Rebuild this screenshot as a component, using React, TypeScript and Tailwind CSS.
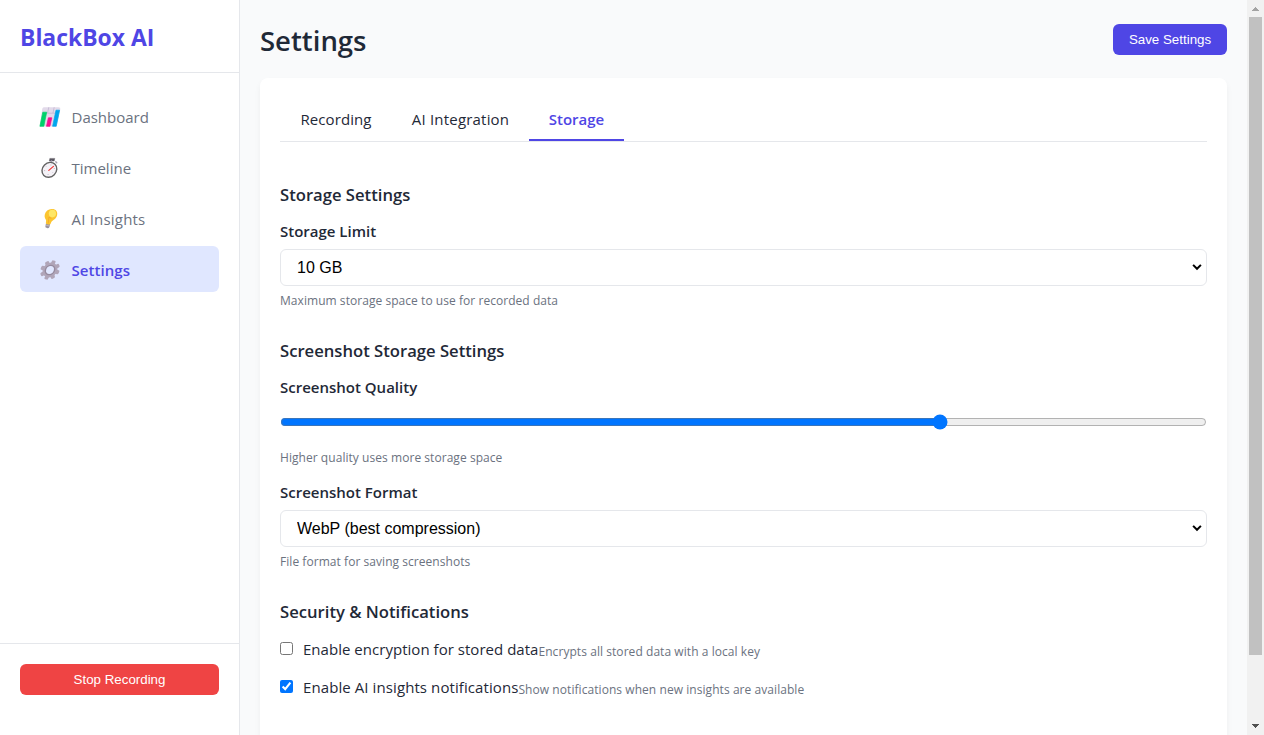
import { useState } from 'react';
import type { ReactNode } from 'react';

function ChartIcon() {
  return (
    <svg width="24" height="22" viewBox="0.8 0 24 22" className="shrink-0">
      <path d="M5.6 1.2H20.4Q22.6 1.2 22.1 3.2L18.4 20.6H1.6L4.1 2.8Q4.4 1.2 5.6 1.2Z" fill="#e2daea" />
      <path d="M10.6 1.2 9.4 7M16 1.2 14.8 7M4 7.2H20" stroke="#c3b6d2" strokeWidth=".8" />
      <path d="M4.6 6.2H8.5L5.6 20.3H1.7Z" fill="#00d26a" stroke="#00d26a" strokeWidth=".7" strokeLinejoin="round" />
      <path d="M10.2 11.8H13.6L11.7 20.3H8.3Z" fill="#fc0f91" stroke="#f70a8d" strokeWidth=".7" strokeLinejoin="round" />
      <path d="M17.8 4.2H21.4L18 20.3H14.4Z" fill="#00a6ed" stroke="#00a6ed" strokeWidth=".7" strokeLinejoin="round" />
    </svg>
  );
}

function StopwatchIcon() {
  return (
    <svg width="24" height="22" viewBox="0.5 0 24 22" className="shrink-0">
      <path d="M11.3 1.4H16.3L15.7 4H10.8Z" fill="#5a5661" stroke="#5a5661" strokeWidth=".4" strokeLinejoin="round" />
      <path d="M13 4 12.7 5.5M17.3 4.8 18.2 5.7" stroke="#aaa2b2" strokeWidth="1.5" strokeLinecap="round" />
      <ellipse cx="10.9" cy="12.8" rx="7.9" ry="6.9" transform="rotate(-45 10.9 12.8)" fill="#f5f2f7" stroke="#636363" strokeWidth="1.4" />
      <path d="M12.4 7.6V8.4M9.6 17V17.8M5.7 13.6H6.6M15.3 11.5H16.2M7.5 9.4 8 9.9M14.2 15.5 14.7 16" stroke="#aaa2b2" strokeWidth=".8" />
      <path d="M10.3 13.4 14.9 9.4" stroke="#f03535" strokeWidth="1.2" strokeLinecap="round" />
    </svg>
  );
}

function BulbIcon() {
  return (
    <svg width="24" height="22" viewBox="0 0 24 22" className="shrink-0">
      <path d="M7 15.2 11.2 16.2 10.3 19.2Q9.7 20.7 8 20.1L6.9 19.6Q6.2 19.2 6.4 18.4Z" fill="#9a929c" />
      <path d="M6.7 17.1 10.9 18.1" stroke="#c9c2cc" strokeWidth=".7" />
      <path d="M12.6 1C16.8 .8 18.9 3.5 18.1 7.2C17.3 10.8 14.1 11.8 12.5 13.7C11.8 14.5 11.9 16.1 11 16.3C9.7 16.6 7.6 16.2 7 15.4C6.6 14.8 7.4 13.1 7 12C6.4 10.5 5.1 9.2 5.8 6.4C6.6 3.1 9.2 1.2 12.6 1Z" fill="#fcc52f" />
      <ellipse cx="13.4" cy="5.6" rx="3.6" ry="3.8" fill="#fff17a" opacity=".75" />
      <path d="M9.9 9.2 9.2 15.5M9.9 9.2 12.3 10.4" stroke="#f3a52c" strokeWidth=".8" fill="none" />
    </svg>
  );
}

function GearIcon() {
  const teeth = [0, 45, 90, 135, 180, 225, 270, 315];
  return (
    <svg width="24" height="22" viewBox="0 0 24 22" className="shrink-0">
      <g transform="translate(11 11) skewX(-10)">
        {teeth.map((a) => (
          <rect key={a} x="-2" y="-9.7" width="4" height="5" rx="1.2" fill="#b0a5b8" transform={`rotate(${a + 15})`} />
        ))}
        <circle r="5.8" fill="none" stroke="#b0a5b8" strokeWidth="3.2" />
        <circle r="4.6" fill="none" stroke="#958a9e" strokeWidth="1.4" />
      </g>
    </svg>
  );
}

function NavItem({ icon, active, children }: { icon: ReactNode; active?: boolean; children: ReactNode }) {
  return (
    <a
      className={
        active
          ? 'flex h-[46px] items-center gap-[9px] rounded-md bg-[#e0e7ff] pt-0.5 pl-[18.5px] font-semibold tracking-[0.06px] text-[#4f46e5]'
          : 'flex h-[46px] items-center gap-[9px] rounded-md pt-0.5 pl-[18.5px] text-[#6b7280]'
      }
    >
      {icon}
      {children}
    </a>
  );
}

function Heading({ children }: { children: ReactNode }) {
  return <h3 className="h-6 text-[16.65px] leading-6 font-semibold">{children}</h3>;
}

function Label({ children }: { children: ReactNode }) {
  return <label className="block h-6 leading-6 font-semibold">{children}</label>;
}

function Help({ children }: { children: ReactNode }) {
  return <p className="h-5 text-[12px] leading-[22px] tracking-[0.05px] text-[#6b7280]">{children}</p>;
}

function Select({ options }: { options: string[] }) {
  return (
    <div className="relative mt-1.5">
      <select className="block h-[37px] w-full appearance-none rounded-md border border-[#e5e7eb] bg-white px-4 font-['Liberation_Sans',sans-serif] text-[16px] text-black">
        {options.map((o) => (
          <option key={o}>{o}</option>
        ))}
      </select>
      <svg width="10" height="8" viewBox="0 0 10 8" className="pointer-events-none absolute top-[14px] right-[5px]">
        <path d="M1.1 1.9 5 5.8 8.9 1.9" fill="none" stroke="#000" strokeWidth="2" />
      </svg>
    </div>
  );
}

function CheckRow({ label, help, checked }: { label: string; help: string; checked?: boolean }) {
  const [on, setOn] = useState(!!checked);
  return (
    <div className="flex h-[38px] items-center">
      <input type="checkbox" checked={on} onChange={() => setOn(!on)} className="relative -top-px mr-2.5 size-[13px]" />
      <span className={on ? 'tracking-[0.09px]' : 'tracking-[0.03px]'}>{label}</span>
      <span className="pt-[5px] text-[12px] tracking-[0.06px] text-[#6b7280]">{help}</span>
    </div>
  );
}

export default function App() {
  const [quality, setQuality] = useState(71.6);
  return (
    <div className="flex h-[735px] w-full overflow-hidden bg-[#f9fafb] font-['Open_Sans',sans-serif] text-[15px] text-[#1f2937]">
      <aside className="flex w-60 shrink-0 flex-col border-r border-[#e5e7eb] bg-white">
        <div className="flex h-[73px] items-center border-b border-[#e5e7eb] px-5 pt-1">
          <h1 className="text-[22.9px] font-bold text-[#4f46e5]">BlackBox AI</h1>
        </div>
        <nav className="flex flex-1 flex-col gap-[5px] px-5 pt-5">
          <NavItem icon={<ChartIcon />}>Dashboard</NavItem>
          <NavItem icon={<StopwatchIcon />}>Timeline</NavItem>
          <NavItem icon={<BulbIcon />}>
            <span className="tracking-[0.2px]">AI Insights</span>
          </NavItem>
          <NavItem icon={<GearIcon />} active>Settings</NavItem>
        </nav>
        <div className="h-[92px] border-t border-[#e5e7eb] px-5 pt-5">
          <button className="h-[31px] w-full rounded-md bg-[#ef4444] font-['Liberation_Sans',sans-serif] text-[13.333px] font-medium text-white">
            Stop Recording
          </button>
        </div>
      </aside>

      <main className="flex min-w-0 flex-1 flex-col px-5">
        <header className="flex h-[78px] shrink-0 items-start justify-between pt-6">
          <h2 className="text-[27.5px] leading-[34px] font-semibold">Settings</h2>
          <button className="h-[31px] w-[114px] rounded-md bg-[#4f46e5] font-['Liberation_Sans',sans-serif] text-[13.333px] font-medium text-white">
            Save Settings
          </button>
        </header>
        <section className="h-[900px] shrink-0 rounded-lg bg-white px-5 pt-5 shadow-[0_4px_6px_rgba(0,0,0,0.05)]">
          <div className="flex h-11 border-b border-[#e5e7eb]">
            <div className="flex w-28 items-center justify-center tracking-[0.1px]">Recording</div>
            <div className="flex w-[137px] items-center justify-center tracking-[0.2px]">AI Integration</div>
            <div className="flex w-[95px] items-center justify-center border-b-2 border-[#4f46e5] pt-0.5 font-semibold text-[#4f46e5]">
              Storage
            </div>
          </div>

          <div className="pt-[41px]">
            <Heading>Storage Settings</Heading>
            <div className="pt-3">
              <Label>Storage Limit</Label>
              <Select options={['10 GB', '20 GB', '50 GB']} />
            </div>
            <div className="pt-1">
              <Help>Maximum storage space to use for recorded data</Help>
            </div>
          </div>

          <div className="pt-[29px]">
            <Heading>Screenshot Storage Settings</Heading>
            <div className="pt-3">
              <Label>Screenshot Quality</Label>
              <input
                type="range"
                min="0"
                max="100"
                step="any"
                value={quality}
                onChange={(e) => setQuality(Number(e.target.value))}
                className="mt-[15px] block h-4 w-full"
              />
            </div>
            <div className="pt-[17px]">
              <Help>Higher quality uses more storage space</Help>
            </div>
            <div className="pt-[13px]">
              <Label>Screenshot Format</Label>
              <Select options={['WebP (best compression)', 'PNG', 'JPEG']} />
            </div>
            <div className="pt-1">
              <Help>File format for saving screenshots</Help>
            </div>
          </div>

          <div className="pt-[29px]">
            <Heading>Security &amp; Notifications</Heading>
            <div className="pt-[6px]">
              <CheckRow label="Enable encryption for stored data" help="Encrypts all stored data with a local key" />
              <CheckRow label="Enable AI insights notifications" help="Show notifications when new insights are available" checked />
            </div>
          </div>
        </section>
      </main>

      <div className="flex w-[17px] shrink-0 flex-col items-center bg-[#f1f1f1]">
        <div className="flex h-[17px] items-center justify-center">
          <svg width="7" height="4" viewBox="0 0 7 4" shapeRendering="crispEdges">
            <path d="M3 0H4V1H5V2H6V3H7V4H0V3H1V2H2V1H3Z" fill="#a3a3a3" />
          </svg>
        </div>
        <div className="h-[638px] w-[13px] bg-[#c1c1c1]" />
        <div className="flex flex-1 items-end pb-[7px]">
          <svg width="7" height="4" viewBox="0 0 7 4" shapeRendering="crispEdges">
            <path d="M0 0H7V1H6V2H5V3H4V4H3V3H2V2H1V1H0Z" fill="#505050" />
          </svg>
        </div>
      </div>
    </div>
  );
}
